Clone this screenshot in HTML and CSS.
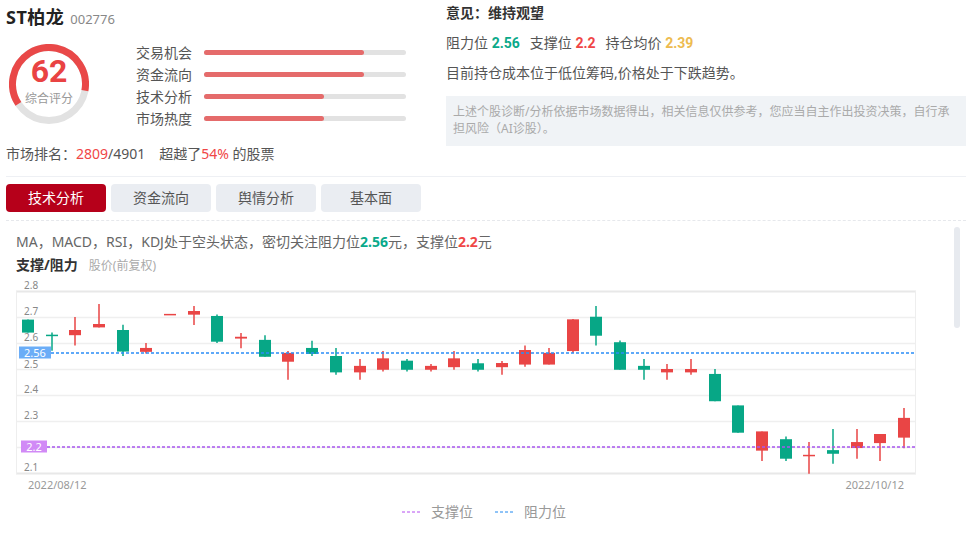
FILE: index.html
```html
<!DOCTYPE html>
<html lang="zh-CN">
<head>
    <meta charset="UTF-8">
    <meta name="viewport" content="width=device-width, initial-scale=1.0">
    <title>ST柏龙 诊股</title>
    <link rel="stylesheet" href="styles.css">
</head>
<body>
<div class="page">
    <section class="summary">
        <div class="score-col">
            <h1 class="stock">ST柏龙<span class="code">002776</span></h1>
            <div class="score-row">
                <div class="gauge">
                    <svg width="80" height="80" viewBox="0 0 80 80">
                        <circle cx="40" cy="40" r="36.5" fill="none" stroke="#e2e2e2" stroke-width="7"/>
                        <circle cx="40" cy="40" r="36.5" fill="none" stroke="#e94848" stroke-width="7"
                                stroke-dasharray="142.2 229.4" transform="rotate(147 40 40)"/>
                    </svg>
                    <div class="gauge-text">
                        <b>62</b>
                        <span>综合评分</span>
                    </div>
                </div>
                <ul class="factors">
                    <li><span class="label">交易机会</span><span class="bar"><i style="width: 79%"></i></span></li>
                    <li><span class="label">资金流向</span><span class="bar"><i style="width: 79%"></i></span></li>
                    <li><span class="label">技术分析</span><span class="bar"><i style="width: 59.5%"></i></span></li>
                    <li><span class="label">市场热度</span><span class="bar"><i style="width: 59.5%"></i></span></li>
                </ul>
            </div>
            <p class="rank">市场排名：<em>2809</em>/4901<span class="gap"></span>超越了<em>54%</em> 的股票</p>
        </div>
        <div class="advice-col">
            <p class="advice">意见：维持观望</p>
            <p class="levels">阻力位 <b class="up">2.56</b><span class="sep"></span>支撑位 <b class="down">2.2</b><span class="sep"></span>持仓均价 <b class="avg">2.39</b></p>
            <p class="trend">目前持仓成本位于低位筹码,价格处于下跌趋势。</p>
            <div class="disclaimer">上述个股诊断/分析依据市场数据得出，相关信息仅供参考，您应当自主作出投资决策，自行承担风险（AI诊股）。</div>
        </div>
    </section>

    <nav class="tabs">
        <a class="tab active" href="#">技术分析</a>
        <a class="tab" href="#">资金流向</a>
        <a class="tab" href="#">舆情分析</a>
        <a class="tab" href="#">基本面</a>
    </nav>

    <section class="analysis">
        <p class="tech-summary">MA，MACD，RSI，KDJ处于空头状态，密切关注阻力位<b class="up">2.56</b>元，支撑位<b class="down">2.2</b>元</p>
        <h2 class="chart-title">支撑/阻力<span>股价(前复权)</span></h2>
        <svg id="kline" class="kline" width="930" height="220" viewBox="6 276 930 220"></svg>
        <div class="legend">
            <span class="key">
                <svg width="19" height="2"><line x1="0" y1="1" x2="19" y2="1" stroke="#b44cf0" stroke-dasharray="3 2"/></svg>
                支撑位
            </span>
            <span class="key">
                <svg width="19" height="2"><line x1="0" y1="1" x2="19" y2="1" stroke="#1e88f0" stroke-dasharray="3 2"/></svg>
                阻力位
            </span>
        </div>
    </section>

    <div class="scrollbar"></div>
</div>

<script>
    // daily candles: open, close, high, low
    const candles = [
        [2.69, 2.64, 2.69, 2.64], [2.632, 2.630, 2.64, 2.57], [2.63, 2.65, 2.70, 2.59],
        [2.66, 2.673, 2.75, 2.66], [2.65, 2.567, 2.67, 2.55], [2.566, 2.581, 2.60, 2.56],
        [2.710, 2.712, 2.712, 2.710], [2.709, 2.723, 2.742, 2.669], [2.704, 2.605, 2.71, 2.60],
        [2.617, 2.624, 2.638, 2.58], [2.612, 2.547, 2.63, 2.547], [2.528, 2.562, 2.569, 2.459],
        [2.581, 2.558, 2.609, 2.55], [2.55, 2.487, 2.581, 2.478], [2.487, 2.512, 2.538, 2.459],
        [2.497, 2.541, 2.569, 2.49], [2.532, 2.497, 2.538, 2.49], [2.497, 2.512, 2.519, 2.49],
        [2.507, 2.541, 2.569, 2.497], [2.522, 2.497, 2.538, 2.49], [2.507, 2.523, 2.531, 2.478],
        [2.517, 2.573, 2.59, 2.509], [2.517, 2.562, 2.581, 2.517], [2.569, 2.691, 2.692, 2.562],
        [2.701, 2.628, 2.742, 2.59], [2.603, 2.497, 2.61, 2.497], [2.512, 2.497, 2.538, 2.459],
        [2.487, 2.50, 2.519, 2.459], [2.487, 2.50, 2.538, 2.478], [2.481, 2.376, 2.50, 2.376],
        [2.36, 2.255, 2.36, 2.255], [2.186, 2.26, 2.26, 2.146], [2.23, 2.155, 2.24, 2.146],
        [2.165, 2.170, 2.219, 2.097], [2.188, 2.174, 2.269, 2.136], [2.196, 2.219, 2.269, 2.155],
        [2.215, 2.25, 2.25, 2.146], [2.236, 2.312, 2.35, 2.195]
    ];

    const NS = 'http://www.w3.org/2000/svg';
    const svg = document.getElementById('kline');
    const plotLeft = 16, plotRight = 916, plotTop = 290;
    const y = p => plotTop + (2.8 - p) * 260;

    function el(name, attrs, text) {
        const node = document.createElementNS(NS, name);
        for (const k in attrs) node.setAttribute(k, attrs[k]);
        if (text) node.textContent = text;
        svg.appendChild(node);
        return node;
    }

    // grid + axis labels (2.2 sits under the support tag)
    for (let i = 0; i <= 7; i++) {
        const p = 2.8 - i / 10;
        const gy = Math.round(y(p)) + 0.5;
        const edge = i === 0 || i === 7;
        el('line', { x1: plotLeft, x2: plotRight, y1: gy, y2: gy, stroke: edge ? '#e8e8e8' : '#efefef', 'stroke-width': edge ? 2 : 1.5 });
        if (i !== 6) el('text', { x: 24, y: i === 3 ? gy - 1.5 : gy - 3, class: 'tick' }, p.toFixed(1));
    }
    el('line', { x1: plotLeft + 0.5, x2: plotLeft + 0.5, y1: plotTop, y2: y(2.1) + 1, stroke: '#eeeeee', 'stroke-width': 1 });
    el('line', { x1: plotRight - 0.5, x2: plotRight - 0.5, y1: plotTop, y2: y(2.1) + 1, stroke: '#eeeeee', 'stroke-width': 1 });

    // candles
    candles.forEach(([o, c, h, l], i) => {
        const cx = Math.round(28 + i * 23.68);
        const color = c >= o ? '#e94545' : '#07a786';
        el('line', { x1: cx, x2: cx, y1: y(h), y2: y(l), stroke: color, 'stroke-width': 1.5 });
        const by = y(Math.max(o, c));
        const bh = Math.max(Math.abs(y(o) - y(c)), 1.5);
        el('rect', { x: cx - 6, y: by, width: 12, height: bh, fill: color });
    });

    // resistance / support lines
    const levels = [
        { price: 2.56, color: '#2a8df8', box: '#6badf7', x: 19, w: 32, label: '2.56' },
        { price: 2.2, color: '#a855f0', box: '#d18af6', x: 21, w: 26, label: '2.2' }
    ];
    levels.forEach(level => {
        const ly = Math.round(y(level.price));
        el('line', { x1: level.x + level.w, x2: plotRight, y1: ly, y2: ly, stroke: level.color, 'stroke-width': 1.5, 'stroke-dasharray': '3 2' });
        el('rect', { x: level.x, y: ly - 6.5, width: level.w, height: 12, fill: level.box });
        el('text', { x: level.x + level.w / 2, y: ly + 4, class: 'tag' }, level.label);
    });

    el('text', { x: 28, y: 488, class: 'date' }, '2022/08/12');
    el('text', { x: 904, y: 488, class: 'date end' }, '2022/10/12');
</script>
</body>
</html>
```

FILE: styles.css
```css
body {
    margin: 0;
    font-family: "Noto Sans", "Noto Sans CJK SC", sans-serif;
    color: #333;
    background: #fff;
}
p, h1, h2, ul {
    margin: 0;
    padding: 0;
}
.page {
    position: relative;
    padding: 0 6px;
}
.up {
    color: #0aa98a;
}
.down {
    color: #f04646;
}
.avg {
    color: #edbb4f;
}

/* summary */
.summary {
    display: flex;
    height: 176px;
    margin-right: -4px;
    border-bottom: 1px solid #eef0f4;
}
.score-col {
    width: 440px;
}
.stock {
    padding-top: 6px;
    font-size: 18px;
    line-height: 22px;
    font-weight: bold;
    letter-spacing: 0.5px;
    color: #222;
}
.stock .code {
    margin-left: 6px;
    font-size: 13px;
    font-weight: normal;
    letter-spacing: 0;
    color: #888;
}
.score-row {
    display: flex;
    align-items: flex-start;
    margin-top: 11px;
}
.gauge {
    position: relative;
    width: 80px;
    height: 80px;
    margin: 3px 0 0 3px;
}
.gauge svg {
    display: block;
}
.gauge-text {
    position: absolute;
    inset: 0;
    display: flex;
    flex-direction: column;
    align-items: center;
    padding-top: 10px;
}
.gauge-text b {
    font-family: Roboto, "Noto Sans", sans-serif;
    font-size: 32px;
    line-height: 34px;
    color: #e94343;
}
.gauge-text span {
    margin-top: 3px;
    font-size: 12px;
    line-height: 16px;
    color: #999;
}
.factors {
    list-style: none;
    margin-left: 47px;
}
.factors li {
    display: flex;
    align-items: center;
    height: 22px;
}
.factors .label {
    width: 68px;
    font-size: 14px;
    color: #555;
}
.bar {
    width: 202px;
    height: 5px;
    background: #e2e2e2;
    border-radius: 3px;
}
.bar i {
    display: block;
    height: 100%;
    background: #e56b6b;
    border-radius: 3px;
}
.rank {
    margin-top: 15px;
    font-size: 14px;
    line-height: 20px;
    color: #555;
}
.rank em {
    font-style: normal;
    color: #f04646;
}
.rank .gap {
    display: inline-block;
    width: 14px;
}
.advice-col {
    flex: 1;
}
.advice {
    padding-top: 3px;
    font-size: 14px;
    line-height: 20px;
    font-weight: bold;
    color: #333;
}
.levels,
.trend {
    margin-top: 10px;
    font-size: 14px;
    line-height: 20px;
    color: #555;
}
.levels b {
    font-family: Roboto, "Noto Sans", sans-serif;
}
.levels .sep {
    display: inline-block;
    width: 10px;
}
.disclaimer {
    margin-top: 13px;
    padding: 7px 10px 9px 7px;
    font-size: 12px;
    line-height: 17px;
    color: #aaa;
    background: #f0f3f6;
}

/* tabs */
.tabs {
    display: flex;
    gap: 5px;
    margin-top: 7px;
}
.tab {
    width: 100px;
    height: 28px;
    line-height: 28px;
    text-align: center;
    font-size: 14px;
    color: #555;
    text-decoration: none;
    background: #eaedf2;
    border-radius: 4px;
}
.tab.active {
    color: #fff;
    background: #b6001a;
}

/* chart */
.analysis {
    margin-top: 8px;
    margin-right: -4px;
    border-top: 1px dashed #e6e8ec;
}
.tech-summary {
    padding: 11px 0 0 10px;
    font-size: 14px;
    line-height: 20px;
    color: #666;
}
.chart-title {
    margin-top: 3px;
    padding-left: 10px;
    font-size: 14px;
    line-height: 20px;
    font-weight: bold;
    color: #333;
}
.chart-title span {
    margin-left: 11px;
    font-size: 12px;
    font-weight: normal;
    color: #aaa;
}
.kline {
    display: block;
    margin-top: 1px;
}
.kline .tick {
    font-size: 10px;
    fill: #888;
}
.kline .tag {
    font-size: 11px;
    fill: #fff;
    text-anchor: middle;
}
.kline .date {
    font-size: 11px;
    fill: #999;
}
.kline .date.end {
    text-anchor: end;
}
.legend {
    display: flex;
    justify-content: center;
    gap: 22px;
    margin-top: 5px;
    padding-right: 4px;
    font-size: 14px;
    line-height: 20px;
    color: #999;
}
.key {
    display: flex;
    align-items: center;
    gap: 10px;
}
.key svg {
    display: block;
}
.scrollbar {
    position: absolute;
    top: 227px;
    left: 954px;
    width: 6px;
    height: 101px;
    background: #e7eaef;
    border-radius: 3px;
}
```
